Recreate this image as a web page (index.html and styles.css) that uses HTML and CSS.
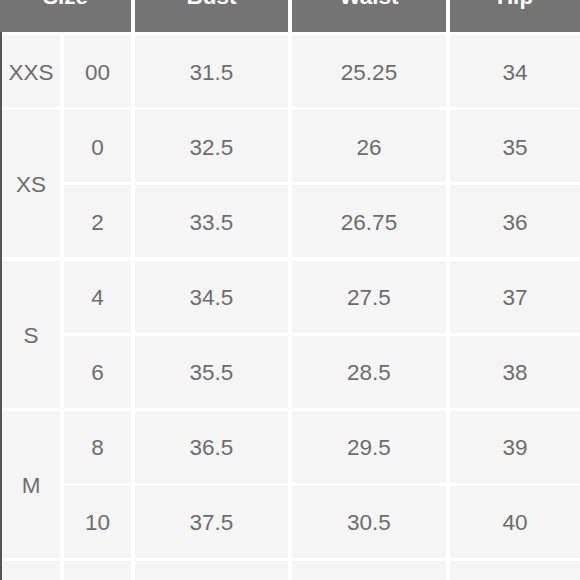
FILE: index.html
```html
<!DOCTYPE html>
<html>
<head>
<meta charset="utf-8">
<link rel="stylesheet" href="styles.css">
</head>
<body>
<div class="chart">
  <div class="grid">
    <div class="hd hd-size">Size</div>
    <div class="hd">Bust</div>
    <div class="hd">Waist</div>
    <div class="hd">Hip</div>

    <div class="c">XXS</div><div class="c">00</div><div class="c">31.5</div><div class="c">25.25</div><div class="c">34</div>

    <div class="c span2">XS</div><div class="c">0</div><div class="c">32.5</div><div class="c">26</div><div class="c">35</div>
    <div class="c">2</div><div class="c">33.5</div><div class="c">26.75</div><div class="c">36</div>

    <div class="c span2">S</div><div class="c">4</div><div class="c">34.5</div><div class="c">27.5</div><div class="c">37</div>
    <div class="c">6</div><div class="c">35.5</div><div class="c">28.5</div><div class="c">38</div>

    <div class="c span2">M</div><div class="c">8</div><div class="c">36.5</div><div class="c">29.5</div><div class="c">39</div>
    <div class="c">10</div><div class="c">37.5</div><div class="c">30.5</div><div class="c">40</div>

    <div class="c span2">L</div><div class="c">12</div><div class="c">38.5</div><div class="c">31.5</div><div class="c">41</div>
    <div class="c">14</div><div class="c">39.5</div><div class="c">32.5</div><div class="c">42</div>
  </div>
</div>
</body>
</html>
```
FILE: styles.css
```css
html, body {
  margin: 0;
  padding: 0;
  background: #ffffff;
  width: 580px;
  height: 580px;
  overflow: hidden;
}
.chart {
  margin-top: -40px;
  font-family: "Liberation Sans", Arial, sans-serif;
  font-size: 22.5px;
  color: #6d6d6d;
}
.grid {
  display: grid;
  grid-template-columns: 58px 67px 153px 154px 130px;
  grid-auto-rows: 72px;
  column-gap: 4px;
  row-gap: 3.15px;
  padding-left: 2px;
  background: linear-gradient(#555555, #555555) no-repeat 0 72px / 2px 100%;
}
.hd {
  background: #747474;
  color: #ffffff;
  font-weight: bold;
  display: flex;
  align-items: center;
  justify-content: center;
  padding-top: 2px;
}
.hd-size {
  grid-column: span 2;
  margin-left: -2px;
}
.c {
  background: #f5f5f5;
  display: flex;
  align-items: center;
  justify-content: center;
  padding-top: 3px;
}
.span2 {
  grid-row: span 2;
}
```
